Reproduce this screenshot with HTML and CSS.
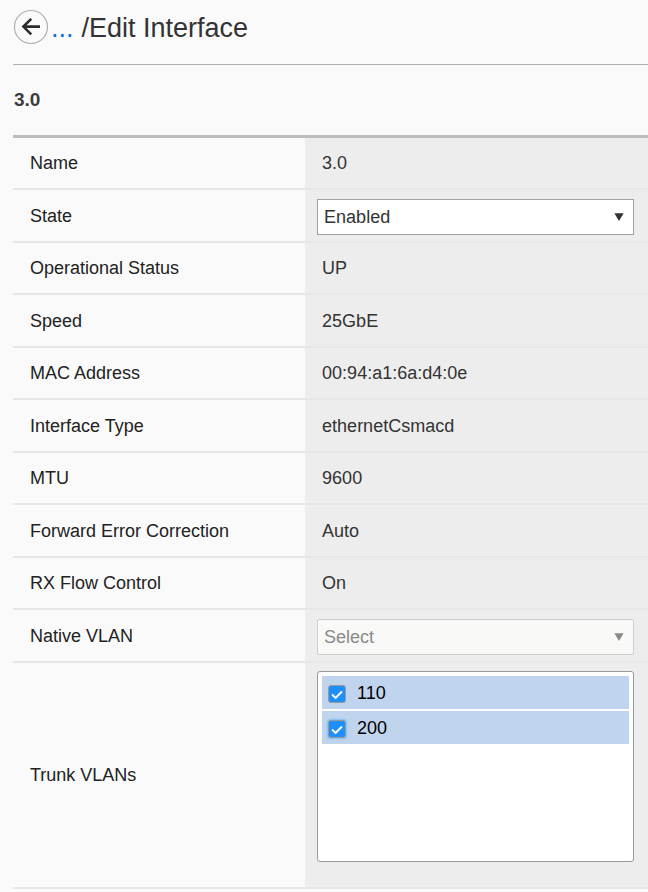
FILE: index.html
```html
<!DOCTYPE html>
<html lang="en">
<head>
<meta charset="utf-8">
<meta name="viewport" content="width=device-width, initial-scale=1">
<title>Edit Interface</title>
<link rel="stylesheet" href="styles.css">
</head>
<body>
<main class="page">
  <header class="header">
    <button class="back" type="button" aria-label="Back">
      <svg viewBox="0 0 34 34" width="34" height="34" fill="none" aria-hidden="true">
        <circle cx="17" cy="17" r="16.5" stroke="#b0b0b0" stroke-width="1.2"/>
        <path d="M26 16.6H9.3M17.2 8.8L9.4 16.6l7.8 7.8" stroke="#2b2b2b" stroke-width="2.6"/>
      </svg>
    </button>
    <a class="more" href="#">...</a>
    <h1 class="title">/Edit Interface</h1>
  </header>
  <h2 class="subtitle">3.0</h2>
  <table class="props">
    <tbody>
      <tr><th scope="row">Name</th><td>3.0</td></tr>
      <tr>
        <th scope="row"><label for="state">State</label></th>
        <td class="field">
          <div class="picker">
            <select id="state"><option>Enabled</option><option>Disabled</option></select>
            <svg class="arrow" viewBox="0 0 10 8" width="10" height="8" aria-hidden="true"><path d="M0.4 0.3h9.2L5 8z" fill="currentColor"/></svg>
          </div>
        </td>
      </tr>
      <tr><th scope="row">Operational Status</th><td>UP</td></tr>
      <tr><th scope="row">Speed</th><td>25GbE</td></tr>
      <tr><th scope="row">MAC Address</th><td>00:94:a1:6a:d4:0e</td></tr>
      <tr><th scope="row">Interface Type</th><td>ethernetCsmacd</td></tr>
      <tr><th scope="row">MTU</th><td>9600</td></tr>
      <tr><th scope="row">Forward Error Correction</th><td>Auto</td></tr>
      <tr><th scope="row">RX Flow Control</th><td>On</td></tr>
      <tr>
        <th scope="row"><label for="native">Native VLAN</label></th>
        <td class="field">
          <div class="picker off">
            <select id="native" disabled><option>Select</option></select>
            <svg class="arrow" viewBox="0 0 10 8" width="10" height="8" aria-hidden="true"><path d="M0.4 0.3h9.2L5 8z" fill="currentColor"/></svg>
          </div>
        </td>
      </tr>
      <tr class="tall">
        <th scope="row" id="trunk">Trunk VLANs</th>
        <td class="field">
          <div class="list" role="group" aria-labelledby="trunk">
            <label class="item"><span class="check"><input type="checkbox" checked><svg viewBox="0 0 18 18" width="18" height="18" fill="none" aria-hidden="true"><path d="M4 9.5l3.6 3.4 6.4-6.4" stroke="#fff" stroke-width="2"/></svg></span>110</label>
            <label class="item"><span class="check"><input class="current" type="checkbox" checked><svg viewBox="0 0 18 18" width="18" height="18" fill="none" aria-hidden="true"><path d="M4 9.5l3.6 3.4 6.4-6.4" stroke="#fff" stroke-width="2"/></svg></span>200</label>
          </div>
        </td>
      </tr>
    </tbody>
  </table>
</main>
</body>
</html>
```
FILE: styles.css
```css
* {
  box-sizing: border-box;
}

body {
  margin: 0;
  background: #fafafa;
  color: #333;
  font: 18px/24px "Liberation Sans", Arial, sans-serif;
}

.page {
  padding-left: 13px;
}

.header {
  display: flex;
  align-items: center;
  height: 65px;
  padding-bottom: 10px;
  border-bottom: 1px solid #b0b0b0;
}

.back {
  width: 34px;
  height: 34px;
  margin-left: 1px;
  padding: 0;
  border: 0;
  background: none;
}

.back svg {
  display: block;
  overflow: visible;
}

.more,
.title {
  margin: 0;
  padding-top: 2px;
  font-size: 27px;
  font-weight: 400;
  line-height: 32px;
}

.more {
  margin: 0 8px 0 3px;
  color: #0f6fdc;
  text-decoration: none;
}

.subtitle {
  margin: 0;
  padding: 23px 1px;
  font-size: 19px;
  line-height: 24px;
  color: #3c3c3c;
}

.props {
  width: 100%;
  border-collapse: separate;
  border-spacing: 0;
  border-top: 3px solid #bcbcbc;
  table-layout: fixed;
}

.props tr {
  height: 52px;
}

.props tr:nth-child(even) {
  height: 53px;
}

.props th,
.props td {
  padding: 0 17px;
  border-bottom: 2px solid #e7e7e7;
  text-align: left;
  vertical-align: middle;
}

.props th {
  width: 46%;
  color: #222;
  font-weight: 400;
}

.props td {
  background: #ededed;
}

.props .tall {
  height: 226px;
}

.props .field {
  padding: 0 14px 0 12px;
}

.props .tall .field {
  padding-top: 8px;
  vertical-align: top;
}

.picker {
  position: relative;
  margin-top: 2px;
  color: #333;
}

.picker select {
  display: block;
  width: 100%;
  height: 36px;
  padding: 0 28px 0 6px;
  appearance: none;
  border: 1px solid #a0a0a0;
  border-radius: 0;
  background: #fff;
  color: inherit;
  font: inherit;
  opacity: 1;
}

.picker.off {
  color: #8a8a8a;
}

.picker.off select {
  border-color: #cecece;
  border-radius: 2px;
  background: #f9f9f8;
}

.arrow {
  position: absolute;
  top: 14px;
  right: 10px;
  pointer-events: none;
}

.list {
  display: flex;
  flex-direction: column;
  gap: 2px;
  height: 191px;
  padding: 4px;
  border: 1px solid #999;
  border-radius: 3px;
  background: #fff;
}

.item {
  display: flex;
  align-items: center;
  gap: 11px;
  height: 33px;
  padding-left: 6px;
  background: #c1d4ed;
  color: #000;
}

.check {
  display: grid;
  margin-top: 3px;
}

.check input,
.check svg {
  grid-area: 1 / 1;
}

.check input {
  width: 18px;
  height: 18px;
  margin: 0;
  appearance: none;
  border: 1px solid #999;
  border-radius: 3px;
  background: #1e8fff;
}

.check .current {
  box-shadow: 0 0 2px 1px #7cc0f5;
}

.check svg {
  pointer-events: none;
  visibility: hidden;
}

.check input:checked + svg {
  visibility: visible;
}
```
